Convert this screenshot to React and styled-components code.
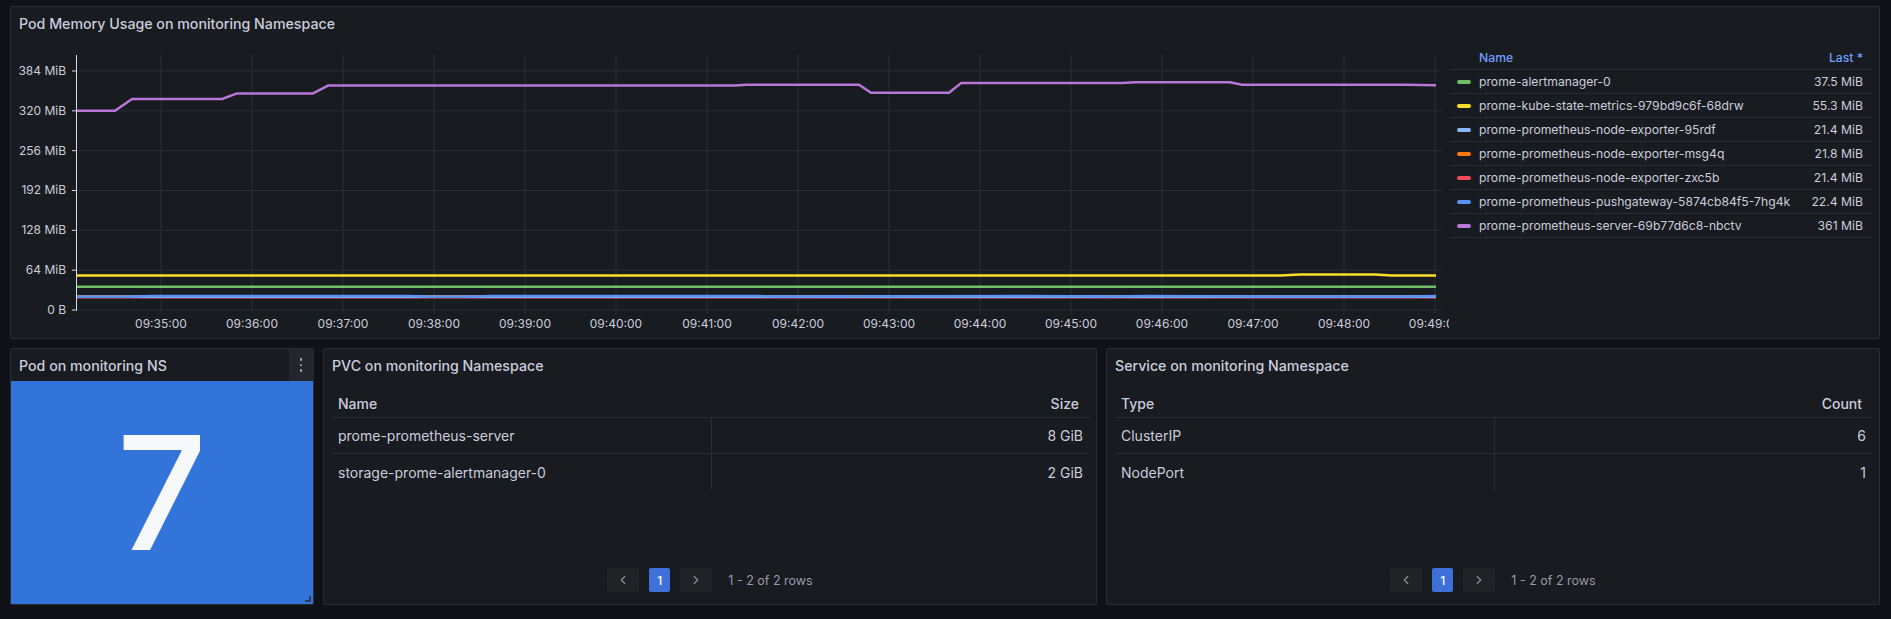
import React from "react";
import styled, { createGlobalStyle } from "styled-components";
import { ChevronLeft, ChevronRight } from "lucide-react";

const GlobalStyle = createGlobalStyle`
  body {
    margin: 0;
    background: #111217;
    font-family: Inter, "Noto Sans", sans-serif;
    color: #ccccdc;
  }
`;

const Page = styled.div`
  width: 1891px;
  height: 619px;
  box-sizing: border-box;
  padding: 6px 11px 0 10px;
  display: flex;
  flex-direction: column;
  gap: 9px;
`;

const Panel = styled.div`
  position: relative;
  box-sizing: border-box;
  height: ${p => p.h}px;
  background: #181b1f;
  border: 1px solid #2a2d33;
  border-radius: 2px;
  display: flex;
  flex-direction: column;
  overflow: hidden;
`;

const Header = styled.div`
  height: 32px;
  flex: none;
  display: flex;
  align-items: center;
  padding-left: 8px;
  font-size: 14.2px;
  font-weight: 500;
  color: #ccccdc;
`;

const Title = styled.div`
  flex: 1;
`;

const MenuButton = styled.div`
  width: 24px;
  height: 32px;
  background: #23262c;
  display: flex;
  flex-direction: column;
  align-items: center;
  justify-content: center;
  gap: 3px;
`;

const Dot = styled.span`
  width: 2.5px;
  height: 2.5px;
  border-radius: 50%;
  background: #a8a8b8;
`;

const ChartBody = styled.div`
  flex: 1;
  display: flex;
`;

const Legend = styled.div`
  width: 423px;
  margin: 7px 7px 0 0;
  font-size: 12.2px;
`;

const LegendHead = styled.div`
  box-sizing: border-box;
  height: 24px;
  border-bottom: 1px solid #2a2d33;
  display: flex;
  align-items: center;
  justify-content: space-between;
  padding: 0 9px 0 30px;
  color: #6e9fff;
  font-weight: 500;
`;

const LegendRow = styled.div`
  box-sizing: border-box;
  height: 24px;
  border-bottom: 1px solid #2a2d33;
  display: flex;
  align-items: center;
  padding: 0 9px 0 8px;
`;

const Swatch = styled.span`
  width: 14px;
  height: 4px;
  border-radius: 2px;
  background: ${p => p.c};
  margin-right: 8px;
`;

const LegendName = styled.span`
  flex: 1;
`;

const BottomRow = styled.div`
  display: grid;
  grid-template-columns: 304px 774px 774px;
  gap: 9px;
`;

const StatBox = styled.div`
  flex: 1;
  background: #3274d9;
  display: flex;
  align-items: center;
  justify-content: center;
  color: #f7f8fa;
  font-size: 158px;
  font-weight: 500;
  line-height: 1;
`;

const ResizeHandle = styled.div`
  position: absolute;
  right: 2px;
  bottom: 2px;
  width: 6px;
  height: 6px;
  border-right: 2px solid #2d3a52;
  border-bottom: 2px solid #2d3a52;
  box-sizing: border-box;
`;

const Table = styled.div`
  margin: 8px 7px 0 8px;
  font-size: 14px;
`;

const HeadRow = styled.div`
  box-sizing: border-box;
  height: 29px;
  display: grid;
  grid-template-columns: 1fr 1fr;
  align-items: center;
  border-bottom: 1px solid #2a2d33;
  font-weight: 500;
`;

const Row = styled.div`
  box-sizing: border-box;
  height: 36px;
  display: grid;
  grid-template-columns: 1fr 1fr;
  border-bottom: ${p => (p.last ? "none" : "1px solid #2a2d33")};
`;

const Cell = styled.div`
  display: flex;
  align-items: center;
  padding: 0 ${p => (p.head ? 10 : 6)}px 0 6px;
  justify-content: ${p => (p.right ? "flex-end" : "flex-start")};
  border-left: ${p => (p.sep ? "1px solid #2a2d33" : "none")};
`;

const Pager = styled.div`
  margin-top: auto;
  margin-bottom: 12px;
  display: flex;
  align-items: center;
  justify-content: center;
  gap: 10px;
`;

const PageButton = styled.div`
  width: ${p => (p.active ? 21 : 32)}px;
  height: 24px;
  border-radius: 2px;
  background: ${p => (p.active ? "#3d71d9" : "#202226")};
  color: ${p => (p.active ? "#ffffff" : "#8e8e9a")};
  display: flex;
  align-items: center;
  justify-content: center;
  font-size: 12px;
  font-weight: 500;
`;

const PagerText = styled.span`
  margin-left: 6px;
  font-size: 12.5px;
  color: #9a9aa8;
`;

const Y = v => 310 - v * 0.6224;
const path = pts =>
  pts.map(([x, v], i) => `${i ? "L" : "M"}${x} ${Y(v).toFixed(1)}`).join(" ");

const series = [
  {
    c: "#b877d9",
    pts: [
      [77, 320], [115, 320], [132, 339], [222, 339], [237, 348], [313, 348],
      [328, 360.5], [736, 360.5], [746, 362], [859, 362], [871, 349], [949, 349],
      [961, 364.5], [1122, 364.5], [1135, 366], [1230, 366], [1242, 362],
      [1405, 362], [1436, 361]
    ]
  },
  {
    c: "#fade2a",
    pts: [[77, 55.3], [1280, 55.3], [1300, 57], [1375, 57], [1392, 55.3], [1436, 55.3]]
  },
  { c: "#73bf69", pts: [[77, 37.5], [1436, 37.5]] },
  { c: "#ff780a", pts: [[77, 21.8], [1436, 21.8]] },
  { c: "#f2495c", pts: [[77, 20.4], [1436, 20.4]] },
  { c: "#8ab8ff", pts: [[77, 21.4], [1436, 21.4]] },
  {
    c: "#5794f2",
    pts: [
      [77, 21.4], [130, 21.4], [150, 22.4], [410, 22.4], [430, 21.4], [470, 21.4],
      [490, 22.4], [760, 22.4], [780, 21.8], [1030, 22.4], [1110, 21.6],
      [1145, 22.4], [1320, 21.6], [1410, 21.6], [1436, 22.4]
    ]
  }
];

const yTicks = [
  [0, "0 B"], [64, "64 MiB"], [128, "128 MiB"], [192, "192 MiB"],
  [256, "256 MiB"], [320, "320 MiB"], [384, "384 MiB"]
];

const minutes = [35, 36, 37, 38, 39, 40, 41, 42, 43, 44, 45, 46, 47, 48, 49];

const Chart = () => (
  <svg width="1438" height="299" viewBox="11 39 1438 299">
    {yTicks.map(([v]) => (
      <line key={v} x1="77" x2="1441" y1={Y(v)} y2={Y(v)} stroke="#2b2e33" strokeWidth="1" />
    ))}
    {minutes.map(m => {
      const x = 161 + 91 * (m - 35);
      return <line key={m} x1={x} x2={x} y1="55" y2="314" stroke="#2b2e33" strokeWidth="1" />;
    })}
    <line x1="76.5" x2="76.5" y1="55" y2="310.5" stroke="#d8d8e4" strokeWidth="1" />
    {yTicks.map(([v, label]) => (
      <g key={label}>
        <line x1="72" x2="77" y1={Y(v)} y2={Y(v)} stroke="#d8d8e4" strokeWidth="1" />
        <text
          x="66"
          y={Y(v) + 4}
          textAnchor="end"
          fontSize="12"
          fill="#ccccdc"
          fontFamily="Inter, sans-serif"
        >
          {label}
        </text>
      </g>
    ))}
    {minutes.map(m => (
      <text
        key={m}
        x={161 + 91 * (m - 35)}
        y="328"
        textAnchor="middle"
        fontSize="12"
        fill="#ccccdc"
        fontFamily="Inter, sans-serif"
      >
        {`09:${m}:00`}
      </text>
    ))}
    {series.map(s => (
      <path
        key={s.c}
        d={path(s.pts)}
        fill="none"
        stroke={s.c}
        strokeWidth="2.5"
        strokeLinejoin="round"
      />
    ))}
  </svg>
);

const legend = [
  ["#73bf69", "prome-alertmanager-0", "37.5 MiB"],
  ["#fade2a", "prome-kube-state-metrics-979bd9c6f-68drw", "55.3 MiB"],
  ["#8ab8ff", "prome-prometheus-node-exporter-95rdf", "21.4 MiB"],
  ["#ff780a", "prome-prometheus-node-exporter-msg4q", "21.8 MiB"],
  ["#f2495c", "prome-prometheus-node-exporter-zxc5b", "21.4 MiB"],
  ["#5794f2", "prome-prometheus-pushgateway-5874cb84f5-7hg4k", "22.4 MiB"],
  ["#b877d9", "prome-prometheus-server-69b77d6c8-nbctv", "361 MiB"]
];

const TablePanel = ({ title, cols, rows }) => (
  <Panel h={257}>
    <Header>
      <Title>{title}</Title>
    </Header>
    <Table>
      <HeadRow>
        <Cell head>{cols[0]}</Cell>
        <Cell head right>{cols[1]}</Cell>
      </HeadRow>
      {rows.map((r, i) => (
        <Row key={r[0]} last={i === rows.length - 1}>
          <Cell>{r[0]}</Cell>
          <Cell right sep>{r[1]}</Cell>
        </Row>
      ))}
    </Table>
    <Pager>
      <PageButton>
        <ChevronLeft size={14} />
      </PageButton>
      <PageButton active>1</PageButton>
      <PageButton>
        <ChevronRight size={14} />
      </PageButton>
      <PagerText>1 - 2 of 2 rows</PagerText>
    </Pager>
  </Panel>
);

export default function App() {
  return (
    <>
      <GlobalStyle />
      <Page>
        <Panel h={333}>
          <Header>
            <Title>Pod Memory Usage on monitoring Namespace</Title>
          </Header>
          <ChartBody>
            <Chart />
            <Legend>
              <LegendHead>
                <span>Name</span>
                <span>Last *</span>
              </LegendHead>
              {legend.map(([c, name, val]) => (
                <LegendRow key={name}>
                  <Swatch c={c} />
                  <LegendName>{name}</LegendName>
                  <span>{val}</span>
                </LegendRow>
              ))}
            </Legend>
          </ChartBody>
        </Panel>
        <BottomRow>
          <Panel h={257}>
            <Header>
              <Title>Pod on monitoring NS</Title>
              <MenuButton>
                <Dot />
                <Dot />
                <Dot />
              </MenuButton>
            </Header>
            <StatBox>7</StatBox>
            <ResizeHandle />
          </Panel>
          <TablePanel
            title="PVC on monitoring Namespace"
            cols={["Name", "Size"]}
            rows={[
              ["prome-prometheus-server", "8 GiB"],
              ["storage-prome-alertmanager-0", "2 GiB"]
            ]}
          />
          <TablePanel
            title="Service on monitoring Namespace"
            cols={["Type", "Count"]}
            rows={[
              ["ClusterIP", "6"],
              ["NodePort", "1"]
            ]}
          />
        </BottomRow>
      </Page>
    </>
  );
}
